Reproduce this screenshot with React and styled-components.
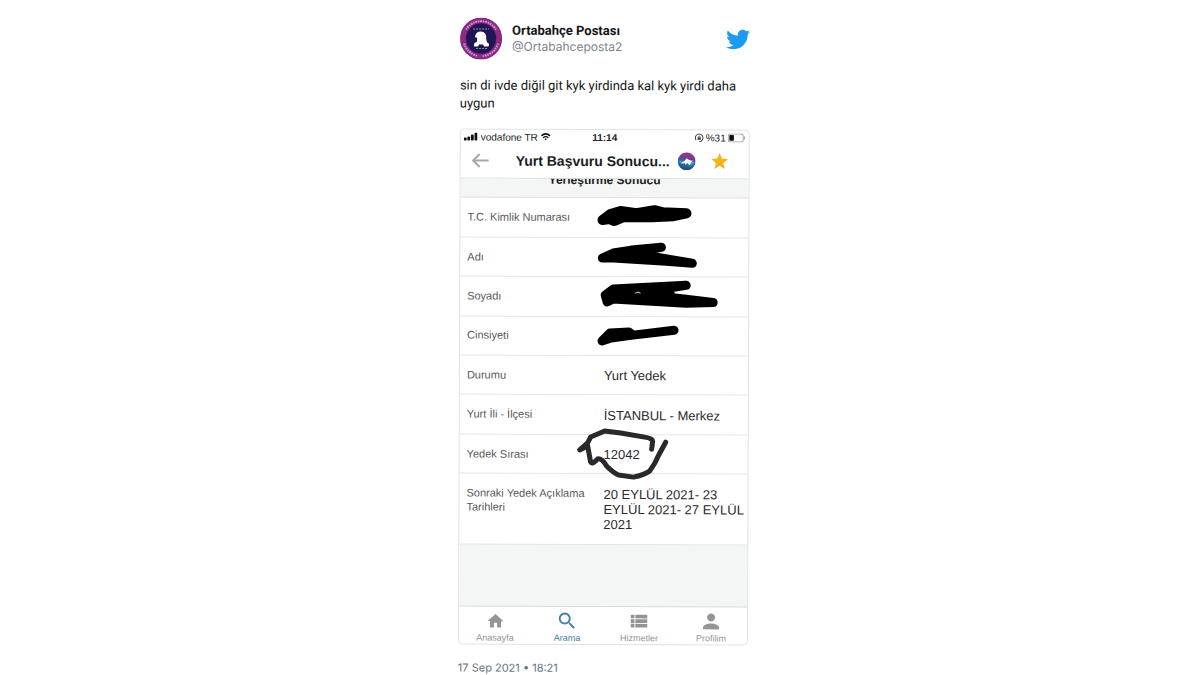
import React from "react";
import styled, { createGlobalStyle } from "styled-components";
import { FaTwitter } from "react-icons/fa";
import {
  MdHome,
  MdPerson,
  MdSearch,
  MdStar,
  MdViewList
} from "react-icons/md";

const GlobalStyle = createGlobalStyle`
  * {
    box-sizing: border-box;
  }
  body {
    margin: 0;
    background: #fff;
    font-family: Inter, "Liberation Sans", sans-serif;
  }
`;
const Page = styled.main`
  display: flex;
  justify-content: center;
  padding: 18px 16px 0 24px;
`;
/* the shared photo sits very slightly crooked */
const Tweet = styled.article`
  width: 100%;
  max-width: 290px;
  transform: rotate(0.2deg);
`;
const TweetHeader = styled.header`
  display: flex;
  align-items: center;
  gap: 10px;
`;
const Author = styled.div`
  flex: 1;
  line-height: 16px;
`;
const Name = styled.h1`
  margin: 0;
  color: #14171a;
  font-family: Roboto, "Liberation Sans", sans-serif;
  font-size: 13px;
  font-weight: 700;
  line-height: 16px;
`;
const Handle = styled.a`
  display: block;
  color: #7b858e;
  font-size: 12px;
  text-decoration: none;
`;
const TweetText = styled.p`
  margin: 17px 0 16px;
  color: #14171a;
  font-family: Roboto, "Liberation Sans", sans-serif;
  font-size: 13px;
  line-height: 18px;
`;
const TweetDate = styled.time`
  display: block;
  margin-top: 16px;
  color: #657380;
  font-size: 11px;
  line-height: 15px;
`;
const Phone = styled.section`
  border: 1px solid #dfe2e4;
  border-radius: 5px;
  overflow: hidden;
  background: #fff;
  font-family: "Liberation Sans", Arial, sans-serif;
`;
const StatusBar = styled.div`
  display: grid;
  grid-template-columns: 1fr auto 1fr;
  align-items: center;
  height: 14px;
  padding: 0 3px;
  color: #222;
  font-size: 10px;
`;
const StatusGroup = styled.div`
  display: flex;
  align-items: center;
  gap: ${props => (props.$end ? 2 : 3)}px;
  justify-content: ${props => (props.$end ? "flex-end" : "flex-start")};
`;
const TitleBar = styled.div`
  display: flex;
  align-items: center;
  height: 35px;
  padding: 0 18px 0 9px;
  border-bottom: 1px solid #d9dbdc;
`;
const IconButton = styled.button`
  display: flex;
  padding: 0;
  border: 0;
  background: none;
  color: ${props => props.$color};
  cursor: pointer;
`;
const Title = styled.h2`
  margin: 0 8px 0 24px;
  color: #1c1c1e;
  font-size: 14px;
  font-weight: 700;
  white-space: nowrap;
`;
const TitleIcons = styled.div`
  display: flex;
  align-items: center;
  gap: 14px;
`;
const SectionStrip = styled.h3`
  height: 19px;
  margin: 0;
  overflow: hidden;
  border-bottom: 1px solid #dfe1e2;
  background: #f4f5f5;
  color: #222;
  font-size: 12px;
  line-height: 2px;
  text-align: center;
`;
const TableArea = styled.div`
  position: relative;
`;
const Table = styled.table`
  width: 100%;
  height: 347px;
  border-collapse: collapse;
  table-layout: fixed;
`;
const Row = styled.tr`
  height: ${props => (props.$tall ? 70 : 39)}px;
  border-bottom: 1px solid #e3e5e6;
`;
const Label = styled.th`
  width: 136px;
  padding: ${props => (props.$tall ? "12px 7px 0" : "0 7px 1px")};
  color: #58595b;
  font-size: 11px;
  font-weight: 400;
  line-height: 14px;
  text-align: left;
  vertical-align: ${props => (props.$tall ? "top" : "middle")};
`;
const Value = styled.td`
  padding: ${props => (props.$tall ? "13px 3px 0 8px" : "1px 3px 0 8px")};
  color: #2b2b2d;
  font-size: 13px;
  line-height: 15px;
  vertical-align: ${props => (props.$tall ? "top" : "middle")};
`;
const MarkerLayer = styled.svg`
  position: absolute;
  top: 0;
  left: 0;
  pointer-events: none;
`;
const EmptyArea = styled.div`
  height: 61px;
  background: #f4f5f5;
`;
const TabBar = styled.nav`
  display: grid;
  grid-template-columns: repeat(4, 1fr);
  height: 38px;
  border-top: 1px solid #d5d9db;
`;
const Tab = styled.a`
  display: flex;
  flex-direction: column;
  align-items: center;
  padding-top: 3px;
  color: ${props => (props.$active ? "#3f7fa6" : "#929496")};
  font-size: 9px;
  line-height: 12px;
  text-decoration: none;
`;
const TabIcon = styled.span`
  display: flex;
  align-items: center;
  justify-content: center;
  height: 22px;
`;

const rows = [
  { label: "T.C. Kimlik Numarası", value: "" },
  { label: "Adı", value: "" },
  { label: "Soyadı", value: "" },
  { label: "Cinsiyeti", value: "" },
  { label: "Durumu", value: "Yurt Yedek" },
  { label: "Yurt İli - İlçesi", value: "İSTANBUL - Merkez" },
  { label: "Yedek Sırası", value: "12042" },
  {
    label: "Sonraki Yedek Açıklama Tarihleri",
    value: "20 EYLÜL 2021- 23 EYLÜL 2021- 27 EYLÜL 2021",
    tall: true
  }
];

const tabs = [
  { name: "Anasayfa", Icon: MdHome, size: 19 },
  { name: "Arama", Icon: MdSearch, size: 22, active: true },
  { name: "Hizmetler", Icon: MdViewList, size: 22 },
  { name: "Profilim", Icon: MdPerson, size: 24 }
];

const Avatar = () => (
  <svg width="42" height="42" viewBox="0 0 42 42" aria-hidden="true">
    <circle cx="21" cy="21" r="21" fill="#6d1d75" />
    <circle cx="21" cy="21" r="18" fill="none" stroke="#8e2a86" strokeWidth="5" />
    <path
      d="M6 12A17.6 17.6 0 0 1 36 12M38 26A17.6 17.6 0 0 1 22 38.6M17 38.2A17.6 17.6 0 0 1 4 26"
      fill="none"
      stroke="#e3c0e3"
      strokeWidth="2"
      strokeDasharray="1.4 0.7 2 0.8"
      opacity="0.7"
    />
    <circle cx="21" cy="21" r="15" fill="#211653" />
    <path d="M13 11.5H29" stroke="#8f88b8" strokeDasharray="2 1" />
    <path
      d="M15 20Q15 14 21 14Q27 15 26 21L27 25Q29 25 29 28L28 29H24L23 27H19L18 29H14V26L17 24V20Z"
      fill="#fff"
    />
    <path d="M16 31H27" stroke="#8f88b8" strokeDasharray="2 1" />
  </svg>
);

const Signal = () => (
  <svg width="14" height="9" viewBox="0 0 14 9" fill="#111" aria-hidden="true">
    <rect x="0" y="5" width="3" height="3" rx="1" />
    <rect x="3.6" y="4" width="2.8" height="4" rx="1" />
    <rect x="7.2" y="2" width="2.8" height="6" rx="1" />
    <rect x="10.8" y="0" width="2.8" height="8" rx="1" />
  </svg>
);

const Wifi = () => (
  <svg width="10" height="8" viewBox="0 0 10 8" fill="none" stroke="#111" aria-hidden="true">
    <path d="M0.6 3Q5 -0.8 9.4 3" strokeWidth="1.5" />
    <path d="M2.4 4.9Q5 2.8 7.6 4.9" strokeWidth="1.4" />
    <path d="M3.8 6L5 7.6L6.2 6Q5 5.2 3.8 6Z" fill="#111" stroke="none" />
  </svg>
);

const RotationLock = () => (
  <svg width="9" height="9" viewBox="0 0 8 8" fill="none" stroke="#333" aria-hidden="true">
    <path d="M1.2 6A3.4 3.4 0 1 1 4 7.4" strokeWidth="0.9" />
    <rect x="2.6" y="3.6" width="2.8" height="2.2" fill="#333" stroke="none" />
    <path d="M3.2 3.8V2.9Q4 2 4.8 2.9V3.8" strokeWidth="0.6" />
  </svg>
);

const Battery = () => (
  <svg width="18" height="9" viewBox="0 0 18 9" aria-hidden="true">
    <rect x="0.5" y="0.5" width="15" height="8" rx="2.4" fill="#fff" stroke="#a5a5a5" />
    <rect x="1.6" y="1.6" width="4.6" height="5.8" rx="1" fill="#111" />
    <path d="M16.8 3V6" stroke="#a5a5a5" />
  </svg>
);

const BackArrow = () => (
  <svg
    width="22"
    height="22"
    viewBox="0 0 22 22"
    fill="none"
    stroke="currentColor"
    strokeWidth="2"
    aria-hidden="true"
  >
    <path d="M10 4.5L3.5 11L10 17.5M4 11H19" />
  </svg>
);

const Assistant = () => (
  <svg width="18" height="18" viewBox="0 0 18 18" aria-hidden="true">
    <defs>
      <linearGradient id="orb" x1="0.6" y1="0" x2="0.4" y2="1">
        <stop offset="0" stopColor="#a8327f" />
        <stop offset="0.35" stopColor="#6b4191" />
        <stop offset="0.6" stopColor="#2f78ad" />
        <stop offset="1" stopColor="#23406f" />
      </linearGradient>
    </defs>
    <circle cx="9" cy="9" r="9" fill="url(#orb)" />
    <path d="M1.5 9Q4 14 9 10Q5 9 1.5 9Z" fill="#45b7dd" />
    <path d="M9 10Q14 14 16.5 10Q13 8 9 10Z" fill="#4fb6c8" />
    <path d="M3.5 11Q7 9.5 9 6Q11 8 15 8.5Q12.5 9.8 12.4 13.4L9.8 10.6L7.4 12.6L7.6 10.6Z" fill="#eef9ff" />
  </svg>
);

const Markings = () => (
  <MarkerLayer
    width="288"
    height="347"
    viewBox="-1 -1 288 347"
    strokeLinecap="round"
    strokeLinejoin="round"
    aria-hidden="true"
  >
    <g fill="#000" stroke="#000" strokeWidth="10">
      <path d="M141 21L149 15L159 12L175 14L193 11L201 13L225 14L212 17L191 18L162 18L153 22L148 20Z" />
      <path d="M141 59L152 54L170 51L200 48L171 53L190 57L207 60L231 64L205 62L152 59Z" strokeWidth="9" />
      <path d="M144 96L152 90L225 86L200 90L209 93L207 98L225 100L252 103L225 104L152 100L146 103Z" strokeWidth="9" />
      <path d="M141 142L149 134L168 133L172 136L213 131L172 136L150 139Z" strokeWidth="9" />
    </g>
    <path d="M174 94L177 93L179 94" fill="none" stroke="#ddd" />
    <path
      d="M191 250L192 242Q192 239 184 238L160 234L144 232L130 238L127 244L119 251L127 247L130 263Q132 266 137 260Q141 259 146 267Q153 274 158 276L173 278Q183 276 189 272Q195 264 198 256L205 243"
      fill="none"
      stroke="#29292b"
      strokeWidth="5"
    />
  </MarkerLayer>
);

const App = () => (
  <Page>
    <GlobalStyle />
    <Tweet>
      <TweetHeader>
        <Avatar />
        <Author>
          <Name>Ortabahçe Postası</Name>
          <Handle href="#profile">@Ortabahceposta2</Handle>
        </Author>
        <FaTwitter size={24} color="#1d9bf0" />
      </TweetHeader>
      <TweetText>
        sin di ivde diğil git kyk yirdinda kal kyk yirdi daha uygun
      </TweetText>
      <Phone>
        <StatusBar>
          <StatusGroup>
            <Signal />
            <span>vodafone TR</span>
            <Wifi />
          </StatusGroup>
          <strong>11:14</strong>
          <StatusGroup $end>
            <RotationLock />
            <span>%31</span>
            <Battery />
          </StatusGroup>
        </StatusBar>
        <TitleBar>
          <IconButton $color="#a7a7b0" aria-label="Geri">
            <BackArrow />
          </IconButton>
          <Title>Yurt Başvuru Sonucu...</Title>
          <TitleIcons>
            <Assistant />
            <IconButton $color="#f2b51d" aria-label="Favori">
              <MdStar size={20} />
            </IconButton>
          </TitleIcons>
        </TitleBar>
        <SectionStrip>Yerleştirme Sonucu</SectionStrip>
        <TableArea>
          <Table>
            <tbody>
              {rows.map(({ label, value, tall }) => (
                <Row key={label} $tall={tall}>
                  <Label scope="row" $tall={tall}>
                    {label}
                  </Label>
                  <Value $tall={tall}>{value}</Value>
                </Row>
              ))}
            </tbody>
          </Table>
          <Markings />
        </TableArea>
        <EmptyArea />
        <TabBar>
          {tabs.map(({ name, Icon, size, active }) => (
            <Tab key={name} href={"#" + name} $active={active}>
              <TabIcon>
                <Icon size={size} />
              </TabIcon>
              {name}
            </Tab>
          ))}
        </TabBar>
      </Phone>
      <TweetDate dateTime="2021-09-17T18:21">17 Sep 2021 • 18:21</TweetDate>
    </Tweet>
  </Page>
);

export default App;
